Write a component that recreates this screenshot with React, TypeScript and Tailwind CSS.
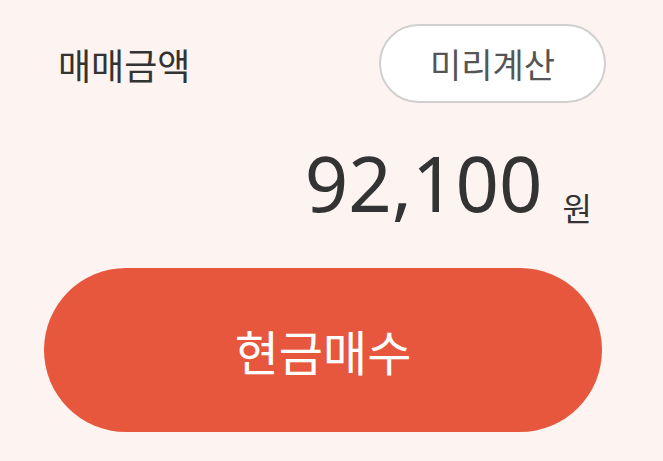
export default function App() {
  const font = { fontFamily: '"Noto Sans CJK KR", "Noto Sans", sans-serif' };
  return (
    <div className="w-[663px] h-[461px] bg-[#fdf4f2] flex flex-col px-[44px] pt-[24px]" style={font}>
      <div className="flex items-center justify-between pl-[14px] pr-[13px]">
        <span className="text-[36px] leading-none text-[#333333]">매매금액</span>
        <button className="w-[227px] h-[79px] rounded-full border-2 border-[#d0d0d0] bg-white text-[34px] text-[#555555] flex items-center justify-center">
          미리계산
        </button>
      </div>
      <div className="flex items-baseline justify-end mt-[42px] pr-[27px]">
        <span className="text-[76px] leading-none text-[#333333] font-['Noto_Sans']">92,100</span>
        <span className="text-[32px] leading-none text-[#333333] ml-[20px] translate-y-[9px]">원</span>
      </div>
      <button className="mt-[47px] w-[558px] h-[164px] rounded-full bg-[#e6573d] text-white text-[48px] flex items-center justify-center">
        현금매수
      </button>
    </div>
  );
}
